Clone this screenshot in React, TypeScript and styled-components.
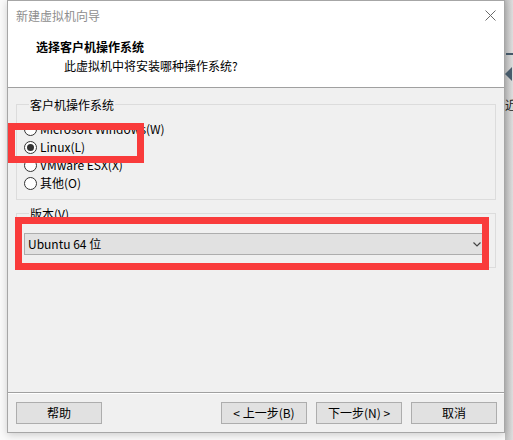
import styled, { createGlobalStyle } from 'styled-components';

const GlobalStyle = createGlobalStyle`
	html, body {
		margin: 0;
		padding: 0;
		background: #fafafa;
	}
	body {
		font-family: 'Noto Sans CJK SC', 'Noto Sans', sans-serif;
		font-size: 12px;
		color: #000;
	}
`;

const osList = [
	{ label: 'Microsoft Windows(W)', checked: false },
	{ label: 'Linux(L)', checked: true },
	{ label: 'VMware ESX(X)', checked: false },
	{ label: '其他(O)', checked: false },
];

export default function App() {
	return (
		<Page>
			<GlobalStyle />
			<Dialog>
				<Header>
					<TitleBar>
						<Title>新建虚拟机向导</Title>
						<CloseBtn>
							<svg width="11" height="11" viewBox="0 0 11 11">
								<path d="M0.5 0.5 L10.5 10.5 M10.5 0.5 L0.5 10.5" stroke="#6a6a6a" strokeWidth="1" />
							</svg>
						</CloseBtn>
					</TitleBar>
					<Heading>选择客户机操作系统</Heading>
					<SubHeading>此虚拟机中将安装哪种操作系统?</SubHeading>
				</Header>

				<Body>
					<Group $pad="7px 7px 7px">
						<Legend>客户机操作系统</Legend>
						{osList.map((os) => (
							<RadioRow key={os.label}>
								<Radio $checked={os.checked} />
								<span>{os.label}</span>
							</RadioRow>
						))}
					</Group>

					<Group $pad="11px 7px 12px">
						<Legend>版本(V)</Legend>
						<Combo>
							<span>Ubuntu 64 位</span>
							<svg width="8" height="5" viewBox="0 0 8 5">
								<path d="M0.5 0.5 L4 4 L7.5 0.5" stroke="#444" strokeWidth="1.2" fill="none" />
							</svg>
						</Combo>
					</Group>
				</Body>

				<Footer>
					<Button>帮助</Button>
					<ButtonGroup>
						<Button>&lt; 上一步(B)</Button>
						<Button>下一步(N) &gt;</Button>
						<Button>取消</Button>
					</ButtonGroup>
				</Footer>
			</Dialog>

			<Backdrop>
				<Dash />
				<Arrow />
				<BackdropChar>近</BackdropChar>
			</Backdrop>

			<Highlight style={{ left: 8, top: 123, width: 136, height: 40 }} />
			<Highlight style={{ left: 15, top: 217, width: 474, height: 53 }} />
		</Page>
	);
}

const Page = styled.div`
	position: relative;
	width: 513px;
	height: 440px;
	display: flex;
	padding-left: 7px;
	box-sizing: border-box;
	overflow: hidden;
`;

const Dialog = styled.div`
	width: 498px;
	height: 433px;
	box-sizing: border-box;
	border: 1px solid #a6a6a6;
	background: #f0f0f0;
	display: flex;
	flex-direction: column;
	box-shadow: 0 2px 8px rgba(0, 0, 0, 0.18);
	position: relative;
	z-index: 1;
`;

const Header = styled.div`
	height: 87px;
	box-sizing: border-box;
	background: #fff;
	border-bottom: 1px solid #a0a0a0;
	display: flex;
	flex-direction: column;
`;

const TitleBar = styled.div`
	height: 30px;
	display: flex;
	align-items: center;
	justify-content: space-between;
	padding: 0 8px 0 8px;
`;

const Title = styled.div`
	color: #8e8e8e;
	line-height: 16px;
`;

const CloseBtn = styled.div`
	display: flex;
	align-items: center;
	margin-top: -1px;
`;

const Heading = styled.div`
	font-weight: bold;
	padding-left: 28px;
	margin-top: 7px;
	line-height: 17px;
`;

const SubHeading = styled.div`
	padding-left: 56px;
	margin-top: 2px;
	line-height: 17px;
`;

const Body = styled.div`
	flex: 1;
	display: flex;
	flex-direction: column;
	padding: 8px 8px 0 8px;
	gap: 5px;
`;

const Group = styled.fieldset<{ $pad: string }>`
	margin: 0;
	border: 1px solid #dcdcdc;
	padding: ${({ $pad }) => $pad};
	display: flex;
	flex-direction: column;
	min-width: 0;
`;

const Legend = styled.legend`
	padding: 0 1px;
	margin-left: 5px;
	line-height: 17px;
	color: #000;
`;

const RadioRow = styled.label`
	display: flex;
	align-items: center;
	height: 18px;
	gap: 3px;
	line-height: 18px;
`;

const Radio = styled.span<{ $checked: boolean }>`
	width: 13px;
	height: 13px;
	box-sizing: border-box;
	border-radius: 50%;
	border: 1px solid #333;
	background: #fff;
	display: flex;
	align-items: center;
	justify-content: center;

	&::after {
		content: '';
		width: 7px;
		height: 7px;
		border-radius: 50%;
		background: #333;
		display: ${({ $checked }) => ($checked ? 'block' : 'none')};
	}
`;

const Combo = styled.div`
	height: 22px;
	box-sizing: border-box;
	background: #e1e1e1;
	border: 1px solid #adadad;
	display: flex;
	align-items: center;
	justify-content: space-between;
	padding: 0 6px 0 3px;
	line-height: 18px;
`;

const Footer = styled.div`
	height: 40px;
	box-sizing: border-box;
	border-top: 1px solid #a0a0a0;
	box-shadow: inset 0 1px 0 #fff;
	display: flex;
	justify-content: space-between;
	padding: 9px 7px 8px 8px;
`;

const ButtonGroup = styled.div`
	display: flex;
	gap: 9px;
`;

const Button = styled.button`
	width: 86px;
	height: 22px;
	box-sizing: border-box;
	background: #e1e1e1;
	border: 1px solid #adadad;
	font-family: inherit;
	font-size: 12px;
	color: #000;
	padding: 0;
	line-height: 18px;
`;

const Backdrop = styled.div`
	flex: 1;
	background: linear-gradient(to right, #bdbdbd, #dedede);
	display: flex;
	flex-direction: column;
	padding-top: 53px;
	gap: 12px;
	overflow: hidden;
`;

const Dash = styled.div`
	width: 8px;
	height: 2px;
	margin-left: 1px;
	background: #465a6a;
`;

const Arrow = styled.div`
	width: 0;
	height: 0;
	border-top: 7px solid transparent;
	border-bottom: 7px solid transparent;
	border-right: 7px solid #4a5e6e;
`;

const BackdropChar = styled.div`
	margin-top: 5px;
	font-size: 12px;
	line-height: 14px;
	color: #222;
	white-space: nowrap;
`;

const Highlight = styled.div`
	position: absolute;
	box-sizing: border-box;
	border: 7px solid #f93b3b;
	z-index: 2;
`;
